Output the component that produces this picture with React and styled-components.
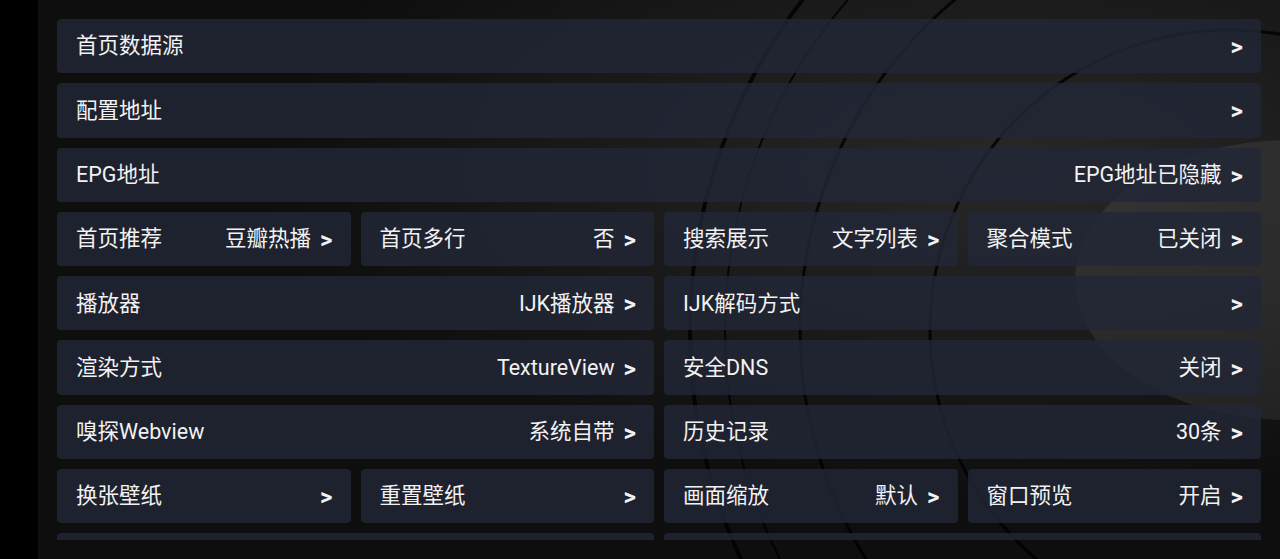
import React from 'react'
import styled, {createGlobalStyle} from 'styled-components'

const rows = [
  [{title: '首页数据源', span: 4}],
  [{title: '配置地址', span: 4}],
  [{title: 'EPG地址', value: 'EPG地址已隐藏', span: 4}],
  [
    {title: '首页推荐', value: '豆瓣热播'},
    {title: '首页多行', value: '否'},
    {title: '搜索展示', value: '文字列表'},
    {title: '聚合模式', value: '已关闭'},
  ],
  [
    {title: '播放器', value: 'IJK播放器', span: 2},
    {title: 'IJK解码方式', span: 2},
  ],
  [
    {title: '渲染方式', value: 'TextureView', span: 2},
    {title: '安全DNS', value: '关闭', span: 2},
  ],
  [
    {title: '嗅探Webview', value: '系统自带', span: 2},
    {title: '历史记录', value: '30条', span: 2},
  ],
  [
    {title: '换张壁纸'},
    {title: '重置壁纸'},
    {title: '画面缩放', value: '默认'},
    {title: '窗口预览', value: '开启'},
  ],
  // last row is scrolled below the fold, only its top edge shows
  [
    {span: 2, hidden: true},
    {span: 2, hidden: true},
  ],
]

function Wallpaper() {
  return (
    <WallpaperSvg viewBox="0 0 1242 559" preserveAspectRatio="none">
      <defs>
        <radialGradient id="glow" cx="0.78" cy="0.3" r="0.6">
          <stop offset="0" stopColor="#282829" />
          <stop offset="1" stopColor="#0e0e0e" />
        </radialGradient>
      </defs>
      <rect width="1242" height="559" fill="url(#glow)" />
      <g fill="none" stroke="#000" strokeOpacity="0.8">
        <circle cx="1192" cy="330" r="540" strokeWidth="4" />
        <circle cx="1192" cy="330" r="505" strokeWidth="2" />
        <circle cx="1192" cy="330" r="430" strokeWidth="3" />
        <circle cx="1192" cy="330" r="300" strokeWidth="3" />
      </g>
      <ellipse cx="1252" cy="280" rx="215" ry="140" fill="#fff" fillOpacity="0.07" />
    </WallpaperSvg>
  )
}

function App() {
  return (
    <Page>
      <GlobalStyle/>
      <Side/>
      <Main>
        <Wallpaper/>
        <List>
          {rows.flat().map((item, i) => (
            <Card key={i} $span={item.span || 1}>
              {!item.hidden && (
                <>
                  <Title>{item.title}</Title>
                  <Value>
                    {item.value}
                    <Arrow>&gt;</Arrow>
                  </Value>
                </>
              )}
            </Card>
          ))}
        </List>
      </Main>
    </Page>
  )
}

export default App

const GlobalStyle = createGlobalStyle`
  html, body {
    margin: 0;
    padding: 0;
    background: #000;
  }
  body {
    font-family: Roboto, "Noto Sans CJK SC", sans-serif;
  }
`
const Page = styled.div`
  display: flex;
  width: 1280px;
  height: 559px;
  overflow: hidden;
  background: #000;
`
const Side = styled.div`
  width: 38px;
  flex-shrink: 0;
  background: #000;
`
const Main = styled.div`
  position: relative;
  flex: 1;
  background: #0e0e0e;
`
const WallpaperSvg = styled.svg`
  position: absolute;
  inset: 0;
  width: 100%;
  height: 100%;
`
const List = styled.div`
  position: relative;
  display: grid;
  grid-template-columns: repeat(4, 1fr);
  grid-auto-rows: 54.3px;
  gap: 10px;
  margin: 19px 19px 0 19px;
  height: 521px;
  overflow: hidden;
`
const Card = styled.div`
  grid-column: span ${p => p.$span};
  display: flex;
  align-items: center;
  justify-content: space-between;
  padding: 0 18px 0 19px;
  border-radius: 4px;
  background: rgba(34, 38, 54, 0.82);
  color: #f2f2f2;
  font-size: 21.5px;
  white-space: nowrap;
`
const Title = styled.span`
  line-height: 1;
`
const Value = styled.span`
  display: flex;
  align-items: center;
  line-height: 1;
`
const Arrow = styled.span`
  margin-left: 9px;
  margin-top: 2px;
  font-weight: 700;
  font-size: 24px;
`
